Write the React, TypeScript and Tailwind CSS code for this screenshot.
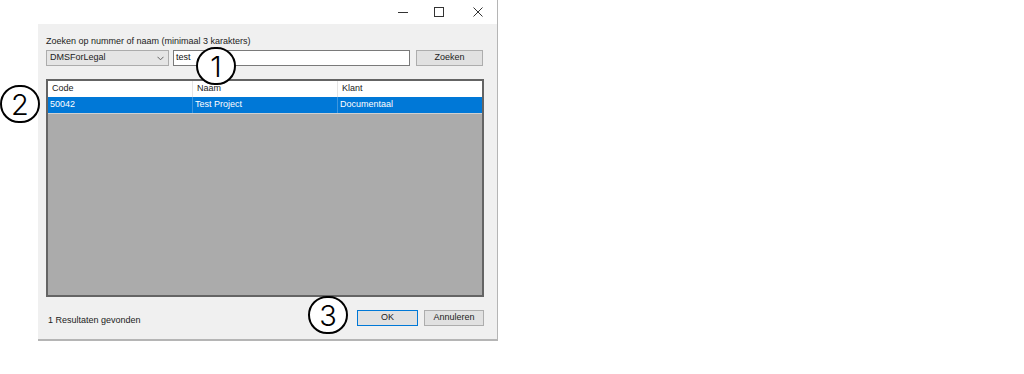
import React from "react";

const font = { fontFamily: '"Liberation Sans", Arial, sans-serif' };

function Marker({ n, className }: { n: string; className: string }) {
  return (
    <div
      className={
        "absolute w-[40px] h-[38px] rounded-full bg-white border-2 border-black flex items-center justify-center text-[29px] leading-none text-black " +
        className
      }
      style={{ fontFamily: 'Inter, "DejaVu Sans", sans-serif' }}
    >
      <span className="font-light">{n}</span>
    </div>
  );
}

function WinButton({
  children,
  className,
  focused,
}: {
  children: React.ReactNode;
  className?: string;
  focused?: boolean;
}) {
  return (
    <div
      className={
        "h-[16px] flex items-center justify-center bg-[#e1e1e1] border text-[9px] text-[#222] " +
        (focused ? "border-[#0078d7] " : "border-[#adadad] ") +
        (className || "")
      }
    >
      {children}
    </div>
  );
}

export default function App() {
  return (
    <div className="relative w-[1024px] h-[374px] bg-white" style={font}>
      <div className="ml-[38px] w-[460px] flex flex-col">
        {/* title bar */}
        <div className="h-[24px] bg-white flex items-center justify-end border-r border-[#b5b5b5] pr-[14px] text-[#333]">
          <svg width="10" height="10" viewBox="0 0 10 10">
            <path d="M0 5.5h10" stroke="#333" strokeWidth="1" />
          </svg>
          <svg width="10" height="10" viewBox="0 0 10 10" className="ml-[26px]">
            <rect x="0.5" y="0.5" width="9" height="9" fill="none" stroke="#333" strokeWidth="1" />
          </svg>
          <svg width="10" height="10" viewBox="0 0 10 10" className="ml-[29px]">
            <path d="M0.5 0.5l9 9M9.5 0.5l-9 9" stroke="#333" strokeWidth="1" />
          </svg>
        </div>

        {/* body */}
        <div className="h-[317px] bg-[#f0f0f0] border-r border-b-2 border-[#b5b5b5] pl-[8px] pr-[13px] pt-[11px] flex flex-col">
          <div className="text-[9px] leading-[12px] text-[#222]">
            Zoeken op nummer of naam (minimaal 3 karakters)
          </div>
          <div className="flex items-center mt-[3px] h-[16px]">
            <div className="w-[123px] h-[16px] bg-[#e5e5e5] border border-[#acacac] flex items-center justify-between pl-[3px] pr-[4px] text-[9px] text-[#222]">
              <span>DMSForLegal</span>
              <svg width="7" height="5" viewBox="0 0 7 5">
                <path d="M0.5 0.8l3 3 3-3" fill="none" stroke="#555" strokeWidth="0.9" />
              </svg>
            </div>
            <div className="ml-[4px] w-[237px] h-[16px] bg-white border border-[#7a7a7a] flex items-center pl-[2px] text-[9px] text-[#111]">
              test
            </div>
            <WinButton className="ml-[6px] w-[67px]">Zoeken</WinButton>
          </div>

          {/* list view */}
          <div className="mt-[13px] w-[438px] h-[218px] border-2 border-[#646464] bg-[#ababab] flex flex-col">
            <div className="h-[16px] bg-white flex text-[9px] text-[#222] shrink-0">
              <div className="w-[145px] pl-[4px] flex items-center border-r border-[#e5e5e5]">Code</div>
              <div className="w-[145px] pl-[4px] flex items-center border-r border-[#e5e5e5]">Naam</div>
              <div className="flex-1 pl-[4px] flex items-center">Klant</div>
            </div>
            <div className="h-[17px] bg-[#0078d7] flex text-[9px] text-white shrink-0 border-b border-[#d0d0d0]">
              <div className="w-[145px] pl-[2px] flex items-center border-r border-[#3d96df]">50042</div>
              <div className="w-[145px] pl-[2px] flex items-center border-r border-[#3d96df]">Test Project</div>
              <div className="flex-1 pl-[2px] flex items-center">Documentaal</div>
            </div>
          </div>

          {/* footer */}
          <div className="mt-[13px] flex items-center h-[16px]">
            <div className="text-[9px] text-[#222] pl-[2px] mt-[6px]">1 Resultaten gevonden</div>
            <div className="flex-1" />
            <WinButton focused className="w-[61px]">OK</WinButton>
            <WinButton className="ml-[6px] w-[60px]">Annuleren</WinButton>
          </div>
        </div>
      </div>

      <Marker n="1" className="left-[196px] top-[47px]" />
      <Marker n="2" className="left-[0px] top-[85px]" />
      <Marker n="3" className="left-[308px] top-[296px]" />
    </div>
  );
}
